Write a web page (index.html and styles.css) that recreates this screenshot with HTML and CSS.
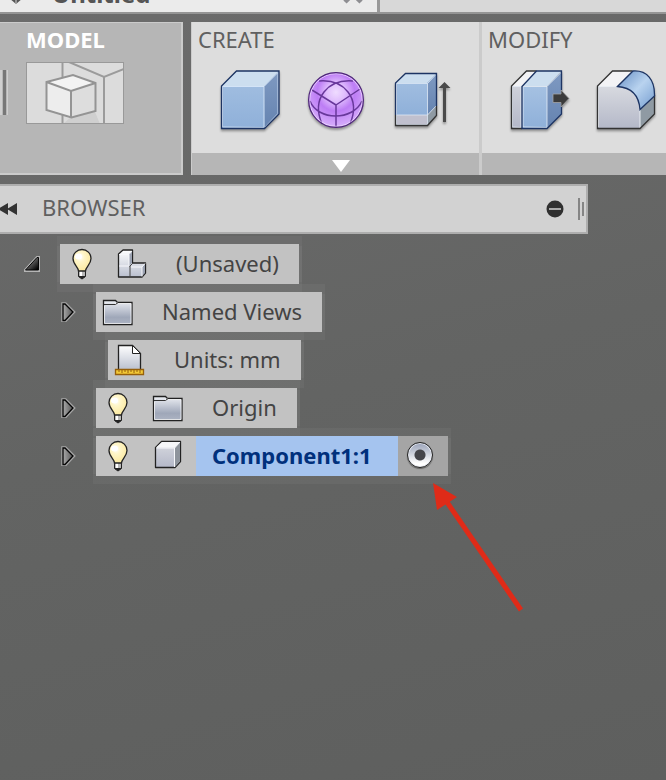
FILE: index.html
```html
<!DOCTYPE html>
<html lang="en">
<head>
<meta charset="utf-8">
<title>Untitled</title>
<link rel="stylesheet" href="styles.css">
</head>
<body>
<svg class="defs" aria-hidden="true">
  <defs>
    <linearGradient id="blueFront" x1="0" y1="0" x2="0" y2="1"><stop offset="0" stop-color="#a5c1e2"/><stop offset="1" stop-color="#8fb0d9"/></linearGradient>
    <linearGradient id="blueSide" x1="0" y1="0" x2="0" y2="1"><stop offset="0" stop-color="#7f9ac2"/><stop offset="1" stop-color="#6583b0"/></linearGradient>
    <linearGradient id="grayFront" x1="0" y1="0" x2="0" y2="1"><stop offset="0" stop-color="#d8dae0"/><stop offset="1" stop-color="#b4b8c8"/></linearGradient>
    <linearGradient id="paper" x1="0" y1="0" x2="0" y2="1"><stop offset="0" stop-color="#ffffff"/><stop offset="1" stop-color="#b9bfce"/></linearGradient>
    <linearGradient id="folderFill" x1="0" y1="0" x2="0" y2="1"><stop offset="0" stop-color="#eef0f5"/><stop offset="0.7" stop-color="#9fa7b9"/><stop offset="1" stop-color="#adb4c3"/></linearGradient>
    <linearGradient id="fillet" x1="0" y1="0" x2="1" y2="1"><stop offset="0.2" stop-color="#86a9d5"/><stop offset="0.5" stop-color="#b9d3ef"/><stop offset="0.8" stop-color="#8fb2dc"/></linearGradient>
    <linearGradient id="darkTri" x1="0" y1="0" x2="1" y2="1"><stop offset="0.3" stop-color="#777"/><stop offset="0.9" stop-color="#050505"/></linearGradient>
    <linearGradient id="grayTri" x1="0" y1="0" x2="1" y2="0"><stop offset="0" stop-color="#aaa"/><stop offset="1" stop-color="#555"/></linearGradient>
    <radialGradient id="purple" cx="0.5" cy="0.36" r="0.62"><stop offset="0" stop-color="#efdcff"/><stop offset="0.28" stop-color="#dfbcfd"/><stop offset="0.55" stop-color="#bd7df5"/><stop offset="1" stop-color="#d6adfb"/></radialGradient>
    <radialGradient id="bulbGlass" cx="0.4" cy="0.35" r="0.65"><stop offset="0" stop-color="#ffffff"/><stop offset="0.35" stop-color="#fff6c9"/><stop offset="1" stop-color="#fbe9a0"/></radialGradient>
  </defs>
  <symbol id="bulb" viewBox="0 0 32 32">
    <path d="M12.500 23.500h7v5l-2 1.500-1.500 1-1.500-1-2-1.500z" fill="#222" stroke="#222"/>
    <path d="M13 23h6v5h-6z" fill="#b9b9b9"/><path d="M14 23h2v5h-2z" fill="#fff"/>
    <path d="M12.500 23c0-4-5.500-6.500-5.500-12.500a9 9 0 0 1 18 0c0 6-5.500 8.500-5.500 12.500z" fill="url(#bulbGlass)" stroke="#222" stroke-width="1.300"/>
    <ellipse cx="12.500" cy="8.500" rx="3.500" ry="3" fill="#fff"/>
  </symbol>
  <symbol id="folder" viewBox="0 0 32 32">
    <path d="M1.500 28.500v-24h12l2 2h14.500v22z" fill="url(#folderFill)" stroke="#222" stroke-width="1.300"/>
    <path d="M2.500 8.500h10l3.500-2M2.500 9.500v18h26.500v-20h-13" fill="none" stroke="#fff" opacity=".75"/>
    <path d="M2 8.500h11.500l2.500-2" fill="none" stroke="#333"/>
  </symbol>
  <symbol id="assembly" viewBox="0 0 32 32">
    <path d="M2.500 29v-23l4.500-4h9.500v13h13v10l-3.500 4z" fill="url(#paper)" stroke="#222" stroke-width="1.300" stroke-linejoin="round"/>
    <path d="M13 6l3-3v12l-2 2-1 1z" fill="#9aa1b0"/><path d="M26 19l3-3v9l-3 3z" fill="#9aa1b0"/>
    <path d="M3 6.500h10l3-3.500M13 6.500v11M3 18h10M15 19h11l3-3.500M26 19v9.500" fill="none" stroke="#f7f8fb"/>
    <path d="M14 18v11M13.500 18.500l3.500-3.500" fill="none" stroke="#444"/>
  </symbol>
  <symbol id="document" viewBox="0 0 32 32">
    <path d="M4.500 26v-24.500h14l8 8v16.500z" fill="url(#paper)" stroke="#222" stroke-width="1.300"/>
    <path d="M18.500 1.500v8h8z" fill="#fff" stroke="#222"/>
    <path d="M1.500 25.500h28v5h-28z" fill="#f3c936" stroke="#96600c" stroke-width="1.300"/>
    <path d="M5 26v2M8 26v3M11 26v2M14 26v3M17 26v2M20 26v3M23 26v2M26 26v3" stroke="#96600c"/>
  </symbol>
  <symbol id="body" viewBox="0 0 32 32">
    <path d="M3.500 27.500v-20l6-6h19v20l-5.500 6z" fill="url(#grayFront)" stroke="#222" stroke-width="1.300" stroke-linejoin="round"/>
    <path d="M4 7.500l6-5.500h18l-5.500 5.500z" fill="#f5f6f8"/><path d="M23 7.500l5-5v19l-5 5.500z" fill="#8e949c"/>
    <path d="M4.500 8h18v19M22.500 8l5.500-6" fill="none" stroke="#f7f8fb"/>
  </symbol>
  <symbol id="closed" viewBox="0 0 16 20"><path d="M2.500 1.500l3 0 8.500 8.500-8.500 9-3 0z" fill="url(#grayTri)" stroke="#a6a6a6" stroke-width="2.500"/><path d="M3 2h2l8 8-8 8.500h-2z" fill="url(#grayTri)" stroke="#050505" stroke-width="1.300"/></symbol>
  <symbol id="open" viewBox="0 0 16 20"><path d="M15 3v14h-14v-1l12-13z" fill="url(#darkTri)" stroke="#b5b5b5" stroke-width="2"/><path d="M14.500 3.500v12.500h-13l11.500-12.500z" fill="url(#darkTri)" stroke="#050505"/></symbol>
</svg>

<header class="tabs">
  <button class="tab" type="button">
    <svg class="tab-icon" viewBox="0 0 16 16"><path d="M1 2h14v8l-7 6-7-6z" fill="#555"/><path d="M3 8l5 4v4M8 12l5-4" fill="none" stroke="#aaa" stroke-width="1.500"/></svg>
    <span class="tab-name">Untitled</span>
    <svg class="tab-close" viewBox="0 0 20 20"><path d="M2 2l16 16M18 2L2 18" stroke="#8e8e92" stroke-width="4.500"/></svg>
  </button>
</header>

<nav class="toolbar" aria-label="Tools">
  <section class="workspace">
    <i class="grip"></i>
    <div>
      <h2 class="title">MODEL</h2>
      <button class="thumb" type="button" aria-label="Model workspace">
        <svg viewBox="0 0 98 62">
          <rect width="98" height="62" fill="#dcdcdc"/>
          <path d="M45 55l24-5 5 12h-37z" fill="#cfcfcf"/>
          <path d="M36.500 0v62M43 0l35 15 20-8M78 15v47" fill="none" stroke="#9b9b9b" stroke-width="2"/>
          <path d="M20.500 20l26.500-7 22.500 8v28l-24 6.500-25-7.500z" fill="#ddd"/>
          <path d="M20.500 20l26.500-7 22.500 8-24.500 8z" fill="#f3f3f3"/><path d="M20.500 20l24.500 9v26.500l-24.500-7.500z" fill="#ededed"/>
          <path d="M20.500 20l26.500-7 22.500 8v28l-24 6.500-25-7.500zl24.500 9 24.500-8M45 29v26" fill="none" stroke="#949494" stroke-width="2"/>
          <rect x=".5" y=".5" width="97" height="61" fill="none" stroke="#999"/>
        </svg>
      </button>
    </div>
  </section>
  <div class="panels">
    <section class="panel">
      <h2 class="title">CREATE</h2>
      <div class="tools">
        <button class="tool" type="button" aria-label="Box"><svg viewBox="0 0 60 60">
          <path d="M1.500 58.500v-42.500l15-15h42.500v43l-14.500 14.500z" fill="url(#blueFront)"/>
          <path d="M1.500 16l15-15h42.500l-15 15.500h-42.500z" fill="#ccdeef"/><path d="M44 16.500l15-15.500v43l-14.500 14.500z" fill="url(#blueSide)"/>
          <path d="M2.500 57v-40.500h41.500v41zM44 16.500l14-14v41L45 57" fill="none" stroke="#dceafa" opacity=".8"/>
          <path d="M1.500 58.500v-42.500l15-15h42.500v43l-14.500 14.500z" fill="none" stroke="#1d3463" stroke-width="1.300"/></svg></button>
        <button class="tool" type="button" aria-label="Form"><svg viewBox="0 0 60 60">
          <circle cx="30" cy="30" r="27.500" fill="url(#purple)"/>
          <path d="M30 35v22M30 35L6 20M30 35L54 19M13 11c25-2 42 17 31 43M47 11c-25-2-42 17-31 43M4 31c8 20 43 20 52 0" fill="none" stroke="#68389b" stroke-width="1.500"/>
          <circle cx="30" cy="30" r="26.300" fill="none" stroke="#ecd6ff" opacity=".85"/><circle cx="30" cy="30" r="27.400" fill="none" stroke="#4e2778" stroke-width="1.200"/></svg></button>
        <button class="tool" type="button" aria-label="Extrude"><svg viewBox="0 0 60 60">
          <path d="M3.500 45v-32l10-9.500h31v32.500l-9 9z" fill="url(#blueFront)"/><path d="M3.500 13l10-9.500h31l-9.500 9.500z" fill="#ccdeef"/>
          <path d="M35.500 13l9-9.500v32.500l-9 9z" fill="url(#blueSide)"/><path d="M3.500 45h32v10.500h-32z" fill="#c0c0ce"/><path d="M35.500 45l9-9v9.500l-9 10z" fill="#8f9aa3"/>
          <path d="M4.500 54.500v-41h31v41zM4.500 45h31l8.500-9M35.500 13.500l8.500-9" fill="none" stroke="#dfe9f5" opacity=".8"/>
          <path d="M3.500 45v10.500h32l9-10v-9.500" fill="none" stroke="#333" stroke-width="1.300"/><path d="M3.500 45v-32l10-9.500h31v32.500" fill="none" stroke="#1d3463" stroke-width="1.300"/>
          <path d="M46.500 18l6-6 6 6h-4.500v34h-3v-34z" fill="#4a4a4a"/></svg></button>
      </div>
      <button class="more" type="button" aria-label="More create tools"><svg viewBox="0 0 18 12"><path d="M0 0h18l-9 12z" fill="#fff"/></svg></button>
    </section>
    <section class="panel panel-last">
      <h2 class="title">MODIFY</h2>
      <div class="tools">
        <button class="tool" type="button" aria-label="Press pull"><svg viewBox="0 0 60 60">
          <path d="M1.500 58.500v-42.500l15-15h10l-14.500 15.500v42z" fill="url(#grayFront)"/><path d="M1.500 16l15-15h10l-15 15z" fill="#f3f3f5"/>
          <path d="M12 16.500h25v42h-25z" fill="url(#blueFront)"/><path d="M12 16.500l14.500-15.500h25l-14.500 15.500z" fill="#ccdeef"/><path d="M37 16.500l15-15.500v43l-15 14.500z" fill="url(#blueSide)"/>
          <path d="M2.500 57v-40.500h8.500v41zM13 57v-40.500h24v41zM37 16.500l14-14" fill="none" stroke="#e6eef8" opacity=".8"/>
          <path d="M12 58.500h-10.500v-42.500l15-15h10" fill="none" stroke="#333" stroke-width="1.300"/><path d="M12 58.500v-42l14.500-15.500h25v43l-14.500 14.500z" fill="none" stroke="#1d3463" stroke-width="1.300"/>
          <path d="M43 24h8v-4l8 8.500-8 8.500v-4.500h-8z" fill="#3b3b3b" stroke="#a3a3a3" stroke-width=".8"/></svg></button>
        <button class="tool" type="button" aria-label="Fillet"><svg viewBox="0 0 60 60">
          <path d="M1.500 58.500v-42.500h20c13 0 22.500 8 22.500 23v19.500z" fill="url(#grayFront)"/><path d="M1.500 16l15-15h20l-15.500 15z" fill="#f3f3f5"/><path d="M44 39l14.500-14v19l-14.500 14.500z" fill="#8f9aa3"/>
          <path d="M2.500 57v-40.500h19M44 39v19M44.500 39l13.500-13" fill="none" stroke="#e9edf2"/>
          <path d="M36.500 1h-20l-15 15v42.500h42.500l14.500-14.500v-19" fill="none" stroke="#333" stroke-width="1.300"/>
          <path d="M21.500 16.500L37 1c14-1 22 9 21.500 25l-14.500 13.500c-1-13-8-22-22.500-23z" fill="url(#fillet)" stroke="#1d3463" stroke-width="1.300"/></svg></button>
      </div>
      <div class="more"></div>
    </section>
  </div>
</nav>

<main class="browser">
  <div class="browser-head">
    <button class="collapse" type="button" aria-label="Collapse"><svg viewBox="2 0 18 12"><path d="M0 6L10 0v12zM9 6L19 0v12z" fill="#333"/></svg></button>
    <h2 class="browser-title">BROWSER</h2>
    <button class="minus" type="button" aria-label="Hide"><svg viewBox="0 0 18 18"><circle cx="9" cy="9" r="8.500" fill="#303030"/><path d="M3 9h12" stroke="#aaa" stroke-width="2"/></svg></button>
    <i class="resize"></i>
  </div>
  <ul class="tree">
    <li class="node">
      <button class="toggle" type="button" aria-label="Collapse document"><svg viewBox="0 0 16 20"><use href="#open"/></svg></button>
      <div class="item"><svg class="icon"><use href="#bulb"/></svg><svg class="icon"><use href="#assembly"/></svg><span class="label">(Unsaved)</span></div>
    </li>
    <li class="node child">
      <button class="toggle" type="button" aria-label="Expand Named Views"><svg viewBox="0 0 16 20"><use href="#closed"/></svg></button>
      <div class="item"><svg class="icon"><use href="#folder"/></svg><span class="label">Named Views</span></div>
    </li>
    <li class="node leaf">
      <div class="item"><svg class="icon"><use href="#document"/></svg><span class="label">Units: mm</span></div>
    </li>
    <li class="node child">
      <button class="toggle" type="button" aria-label="Expand Origin"><svg viewBox="0 0 16 20"><use href="#closed"/></svg></button>
      <div class="item"><svg class="icon"><use href="#bulb"/></svg><svg class="icon"><use href="#folder"/></svg><span class="label">Origin</span></div>
    </li>
    <li class="node child">
      <button class="toggle" type="button" aria-label="Expand Component1:1"><svg viewBox="0 0 16 20"><use href="#closed"/></svg></button>
      <div class="item"><svg class="icon"><use href="#bulb"/></svg><svg class="icon"><use href="#body"/></svg><label class="label selected" for="active">Component1:1</label>
        <span class="activate"><input class="radio" type="radio" id="active" name="active" checked>
          <svg class="pointer" viewBox="0 0 100 140"><path d="M10 16L91 134" stroke="#df2b18" stroke-width="5"/><path d="M3 7l24 14-20 13z" fill="#df2b18"/></svg>
        </span></div>
    </li>
  </ul>
</main>
</body>
</html>
```
FILE: styles.css
```css
* { box-sizing: border-box; }
body {
  margin: 0;
  min-height: 100vh;
  background: linear-gradient(165deg, #6c6c6c, #636463 50%, #5e5f5e);
  color: #444;
  font: 22px/30px "Noto Sans", "Open Sans", sans-serif;
  overflow-x: hidden;
}
button { padding: 0; border: 0; background: none; color: inherit; font: inherit; }
svg { display: block; }
h2 { margin: 0; font-size: 22px; font-weight: 400; }
.defs { position: absolute; width: 0; height: 0; }

.tabs {
  display: flex;
  height: 14px;
  overflow: hidden;
  background: #d8d8d8;
  border-bottom: 2px solid #959595;
}
.tab {
  display: flex;
  align-items: flex-end;
  width: 380px;
  height: 12px;
  padding: 0 14px 8px 8px;
  background: #ebebeb;
  border-right: 3px solid #999;
}
.tab-icon { width: 16px; height: 16px; }
.tab-name { margin-left: 28px; font-size: 24px; line-height: 20px; font-weight: 700; color: #555; }
.tab-close { width: 20px; height: 20px; margin-left: auto; }
.tab-close, .tab-icon { flex: none; }

.toolbar { display: flex; gap: 8px; height: 153px; margin-top: 8px; }
.title { height: 40px; padding-top: 2px; color: #606060; }
.workspace {
  display: flex;
  flex: none;
  width: 183px;
  background: #b6b6b6;
  border: solid #cbcbcb;
  border-width: 1px 2px 2px 0;
}
.workspace .title { height: 39px; padding-top: 1px; color: #fff; font-weight: 700; }
.grip {
  width: 8px;
  height: 45px;
  margin: 47px 18px 0 0;
  border: solid #cfcfcf;
  border-width: 0 1px 0 2px;
  background: linear-gradient(90deg, #b6b6b6 1px, #777 1px, #777 4px, #b6b6b6 4px);
}
.thumb svg { width: 98px; height: 62px; }
.panels { display: flex; flex: 1; min-width: 0; overflow: hidden; }
.panel {
  display: flex;
  flex-direction: column;
  flex: none;
  background: #ddd;
  border: solid #cbcbcb;
  border-width: 0 2px 0 1px;
}
.panel-last { flex: 1 0 auto; border-right: 0; }
.panel .title { padding-left: 6px; }
.tools { display: flex; gap: 26px; flex: 1; padding: 8px 27px 0 28px; }
.tool svg { width: 60px; height: 60px; filter: drop-shadow(0 2px 1px rgba(0, 0, 0, .35)); }
.tool { height: 60px; }
.more { display: flex; justify-content: center; align-items: center; height: 22px; background: #b6b6b6; }
.more svg { width: 18px; height: 12px; margin: 4px 0 0 10px; }

.browser-head {
  display: flex;
  align-items: center;
  max-width: 588px;
  height: 50px;
  margin-top: 9px;
  background: #d2d2d2;
  border: 2px solid #aeaeae;
  border-left: 0;
}
.collapse svg { width: 18px; height: 12px; }
.browser-title { margin-left: 24px; padding-bottom: 4px; flex: 1; color: #606060; }
.minus svg { width: 18px; height: 18px; }
.resize {
  width: 6px;
  height: 22px;
  margin: 0 2px 0 14px;
  background: linear-gradient(#858585, #858585) 0 0 / 2px 22px no-repeat, linear-gradient(#858585, #858585) 4px 4px / 2px 14px no-repeat;
}

.tree { display: flex; flex-direction: column; gap: 8px; margin: 10px 0 0; padding: 0 0 0 24px; list-style: none; }
.node { display: flex; align-items: center; gap: 20px; }
.child { padding-left: 36px; }
.leaf { padding-left: 84px; }
.toggle svg { width: 16px; height: 20px; }
.item {
  display: flex;
  align-items: center;
  height: 40px;
  background: #c2c2c2;
  box-shadow: 0 5px 0 3px rgba(255, 255, 255, .04), 0 -5px 0 3px rgba(255, 255, 255, .04);
}
.icon { flex: none; width: 32px; height: 32px; margin: 0 12px 0 6px; }
.label { padding: 0 20px 2px 16px; line-height: 38px; white-space: nowrap; }
.selected { padding-right: 26px; background: #a5c4ef; color: #00307c; font-weight: 700; }
.activate { position: relative; width: 50px; height: 40px; padding: 6px 9px; background: #a5a5a5; }
.radio {
  display: block;
  appearance: none;
  width: 26px;
  height: 26px;
  margin: 0;
  border: 1px solid #222;
  border-radius: 50%;
  background: radial-gradient(circle, #45464b 5px, transparent 6px), linear-gradient(#99a2b8, #fff 85%);
  box-shadow: inset 0 0 0 1px #e5e8ef, 0 1px 1px rgba(0, 0, 0, .4);
}
.pointer { position: absolute; left: 32px; top: 40px; width: 100px; height: 140px; }
```
